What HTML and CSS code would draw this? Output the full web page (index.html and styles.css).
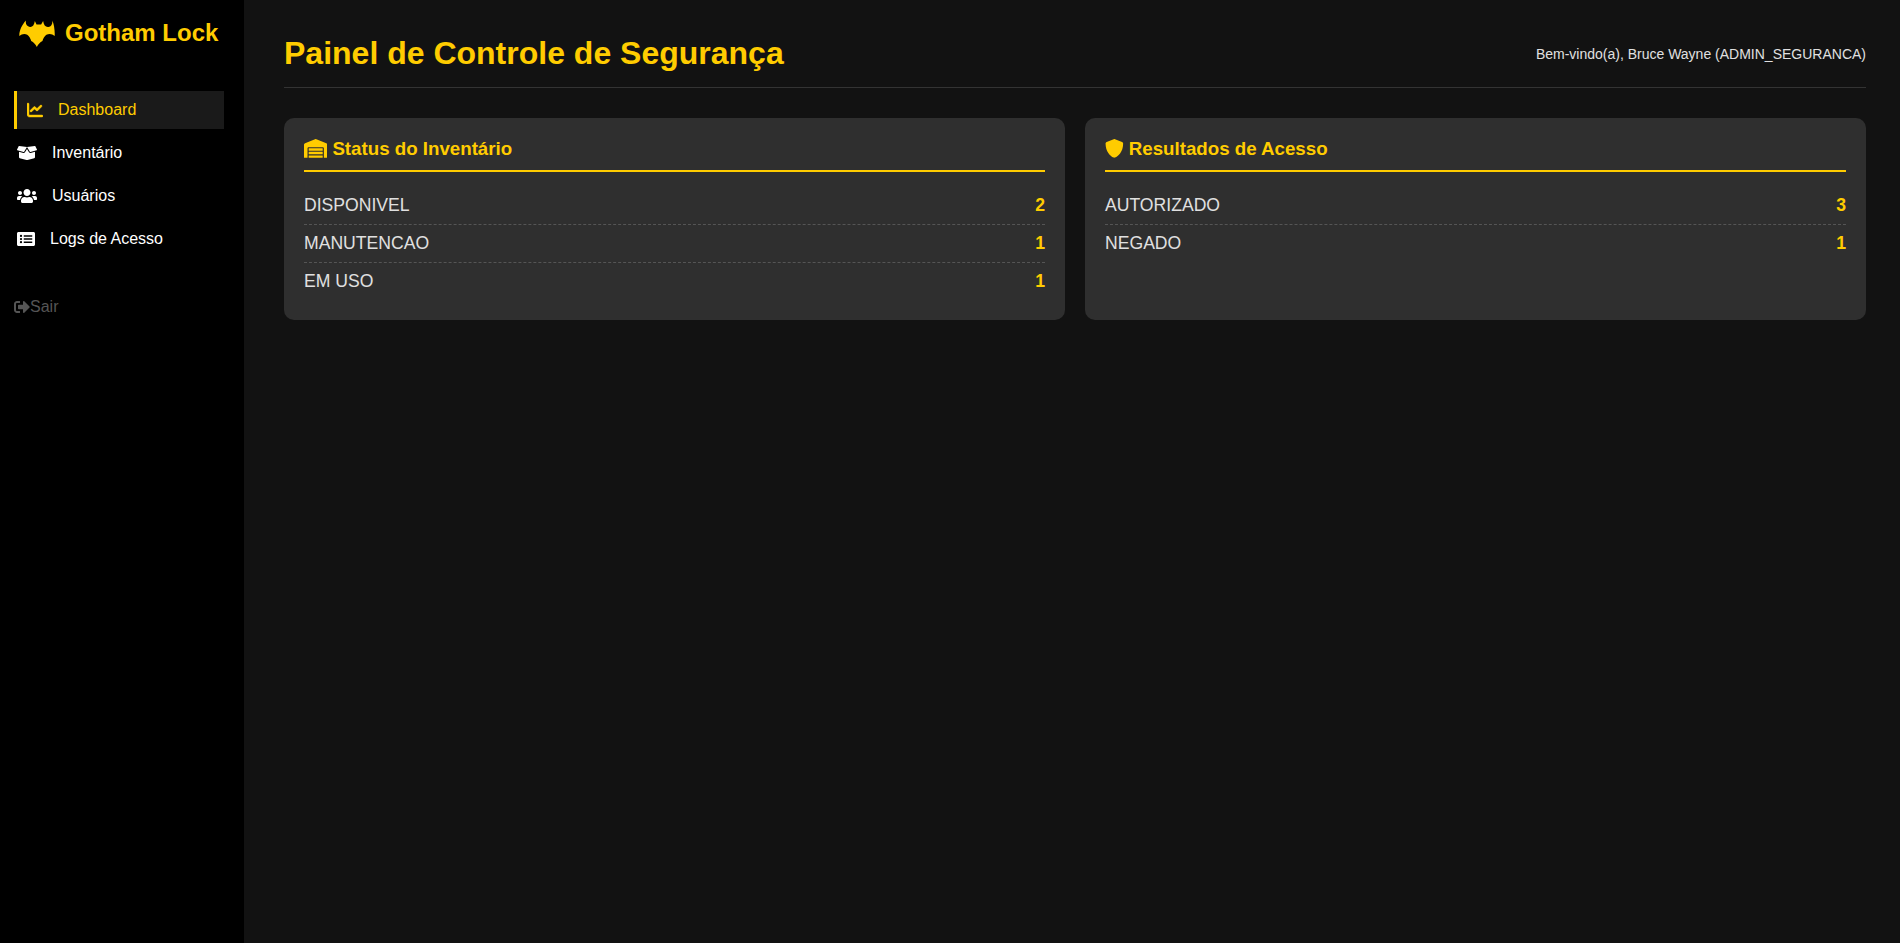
FILE: index.html
```html
<!DOCTYPE html>
<html lang="pt-BR">
<head>
    <meta charset="UTF-8">
    <title>Gotham Lock - Dashboard</title>
    <link rel="stylesheet" href="styles.css">
</head>
<body>
    <aside class="sidebar">
        <div class="logo">
            <svg class="logo-bat" viewBox="57 57 109 81"><path d="M78 58 C76 68 80 76 90 78 C98 79 103 72 105 60 L110 70 L124 70 L130 60 C132 72 137 79 146 78 C155 76 159 68 158 58 C163 70 166 88 165 105 C158 98 148 97 140 101 C134 106 130 112 128 120 C121 124 115 130 111 138 C107 130 101 124 94 120 C92 112 88 106 82 101 C75 97 65 98 58 105 C57 88 68 68 78 58 Z"/></svg>
            <span>Gotham Lock</span>
        </div>
        <nav class="menu">
            <a class="menu-item active" href="#">
                <svg class="icon icon-chart" viewBox="0 0 512 512"><path d="M64 64c0-17.700-14.300-32-32-32S0 46.300 0 64V400c0 44.200 35.800 80 80 80H480c17.700 0 32-14.300 32-32s-14.300-32-32-32H80c-8.800 0-16-7.200-16-16V64zm406.600 86.600c12.500-12.500 12.500-32.800 0-45.300s-32.800-12.500-45.300 0L320 210.700l-57.400-57.400c-12.500-12.500-32.800-12.500-45.300 0l-112 112c-12.500 12.500-12.500 32.800 0 45.300s32.800 12.500 45.300 0L240 221.300l57.400 57.400c12.500 12.500 32.800 12.500 45.300 0l128-128z"/></svg>
                Dashboard
            </a>
            <a class="menu-item" href="#">
                <svg class="icon icon-wide" viewBox="0 0 640 512"><path d="M425.700 256c-16.900 0-32.800-9-41.400-23.400L320 126l-64.200 106.600c-8.700 14.500-24.600 23.500-41.500 23.500-4.500 0-9-.6-13.300-1.900L64 215v178c0 14.700 10 27.500 24.200 31l216.200 54.100c10.200 2.500 20.900 2.500 31 0L551.800 424c14.200-3.600 24.200-16.400 24.200-31V215l-137 39.100c-4.300 1.300-8.800 1.900-13.300 1.900zm212.600-112.200L586.800 41c-3.100-6.200-9.800-9.800-16.700-8.900L320 64l91.700 152.100c3.800 6.300 11.400 9.300 18.500 7.300l197.900-56.500c9.900-2.900 14.700-13.900 10.200-23.100zM53.200 41L1.700 143.800c-4.600 9.200.3 20.200 10.100 23l197.900 56.500c7.100 2 14.700-1 18.500-7.300L320 64 69.800 32.100c-6.900-.8-13.500 2.700-16.600 8.900z"/></svg>
                Inventário
            </a>
            <a class="menu-item" href="#">
                <svg class="icon icon-wide" viewBox="0 0 640 512"><path d="M96 224c35.300 0 64-28.700 64-64s-28.700-64-64-64-64 28.700-64 64 28.700 64 64 64zm448 0c35.300 0 64-28.700 64-64s-28.700-64-64-64-64 28.700-64 64 28.700 64 64 64zm32 32h-64c-17.600 0-33.500 7.100-45.100 18.600 40.300 22.100 68.900 62 75.100 109.400h66c17.700 0 32-14.300 32-32v-32c0-35.300-28.700-64-64-64zm-256 0c61.900 0 112-50.100 112-112S381.900 32 320 32 208 82.100 208 144s50.100 112 112 112zm76.800 32h-8.300c-20.800 10-43.900 16-68.500 16s-47.600-6-68.500-16h-8.300C179.600 288 128 339.600 128 403.200V432c0 26.500 21.500 48 48 48h288c26.500 0 48-21.500 48-48v-28.800c0-63.600-51.600-115.200-115.200-115.200zm-223.700-13.400C161.500 263.100 145.600 256 128 256H64c-35.300 0-64 28.700-64 64v32c0 17.700 14.300 32 32 32h65.900c6.300-47.400 34.900-87.300 75.200-109.400z"/></svg>
                Usuários
            </a>
            <a class="menu-item" href="#">
                <svg class="icon icon-list" viewBox="0 0 576 512"><path fill-rule="evenodd" d="M48 32H528C554.500 32 576 53.500 576 80V432C576 458.500 554.500 480 528 480H48C21.500 480 0 458.500 0 432V80C0 53.500 21.500 32 48 32ZM128 120a36 36 0 1 0 0 72 36 36 0 1 0 0-72ZM128 220a36 36 0 1 0 0 72 36 36 0 1 0 0-72ZM128 320a36 36 0 1 0 0 72 36 36 0 1 0 0-72ZM216 132V180H488V132ZM216 232V280H488V232ZM216 332V380H488V332Z"/></svg>
                Logs de Acesso
            </a>
        </nav>
        <a class="logout" href="#">
            <svg class="icon-logout" viewBox="0 0 512 512"><path d="M497 273L329 441c-15 15-41 4.500-41-17v-96H152c-13.300 0-24-10.700-24-24v-96c0-13.300 10.700-24 24-24h136V88c0-21.400 25.900-32 41-17l168 168c9.300 9.400 9.300 24.600 0 34zM192 436v-40c0-6.600-5.400-12-12-12H96c-17.700 0-32-14.300-32-32V160c0-17.700 14.300-32 32-32h84c6.600 0 12-5.400 12-12V76c0-6.600-5.400-12-12-12H96c-53 0-96 43-96 96v192c0 53 43 96 96 96h84c6.600 0 12-5.400 12-12z"/></svg>Sair
        </a>
    </aside>

    <main class="content">
        <header class="top-bar">
            <h1>Painel de Controle de Segurança</h1>
            <p class="welcome">Bem-vindo(a), Bruce Wayne (ADMIN_SEGURANCA)</p>
        </header>

        <div class="cards">
            <section class="card">
                <h2>
                    <svg class="card-icon icon-warehouse" viewBox="0 0 640 512"><path d="M504 352H136.400c-4.400 0-8 3.600-8 8l-.1 48c0 4.400 3.600 8 8 8H504c4.400 0 8-3.600 8-8v-48c0-4.400-3.600-8-8-8zm0 96H136.100c-4.400 0-8 3.600-8 8l-.1 48c0 4.400 3.600 8 8 8h368c4.400 0 8-3.600 8-8v-48c0-4.400-3.600-8-8-8zm0-192H136.600c-4.400 0-8 3.600-8 8l-.1 48c0 4.400 3.600 8 8 8H504c4.400 0 8-3.600 8-8v-48c0-4.400-3.600-8-8-8zm106.500-139L338.400 3.700a48.150 48.150 0 0 0-36.900 0L29.500 117C11.700 124.500 0 141.900 0 161.300V504c0 4.400 3.600 8 8 8h80c4.400 0 8-3.600 8-8V256c0-17.600 14.600-32 32.600-32h382.800c18 0 32.600 14.400 32.600 32v248c0 4.400 3.600 8 8 8h80c4.400 0 8-3.600 8-8V161.300c0-19.400-11.700-36.800-29.500-44.300z"/></svg>
                    Status do Inventário
                </h2>
                <ul class="stat-list">
                    <li><span>DISPONIVEL</span><b>2</b></li>
                    <li><span>MANUTENCAO</span><b>1</b></li>
                    <li><span>EM USO</span><b>1</b></li>
                </ul>
            </section>
            <section class="card">
                <h2>
                    <svg class="card-icon icon-shield" viewBox="0 0 512 512"><path d="M466.500 83.700l-192-80a48.150 48.150 0 0 0-36.900 0l-192 80C27.700 91.100 16 108.600 16 128c0 198.500 114.500 335.700 221.500 380.300 11.800 4.900 25.100 4.900 36.900 0C360.100 472.600 496 349.300 496 128c0-19.400-11.700-36.900-29.500-44.300z"/></svg>
                    Resultados de Acesso
                </h2>
                <ul class="stat-list">
                    <li><span>AUTORIZADO</span><b>3</b></li>
                    <li><span>NEGADO</span><b>1</b></li>
                </ul>
            </section>
        </div>
    </main>
</body>
</html>
```

FILE: styles.css
```css
* {
    box-sizing: border-box;
}

body {
    margin: 0;
    height: 943px;
    display: flex;
    overflow: hidden;
    background-color: #121212;
    color: #e0e0e0;
    font-family: "Liberation Sans", Arial, sans-serif;
}

.sidebar {
    width: 244px;
    flex-shrink: 0;
    background-color: #000000;
    padding: 15px 14px;
}

.logo {
    display: flex;
    align-items: center;
    gap: 10px;
    height: 36px;
    padding-left: 5px;
    color: #ffcc00;
    font-size: 24px;
    font-weight: 700;
}

.logo-bat {
    width: 36px;
    height: 27px;
    fill: #ffcc00;
}

.menu {
    margin-top: 40px;
}

.menu-item {
    display: flex;
    align-items: center;
    gap: 15px;
    height: 38px;
    margin-bottom: 5px;
    padding-left: 3px;
    color: #ffffff;
    font-size: 16px;
    text-decoration: none;
}

.menu-item.active {
    width: 210px;
    padding-left: 10px;
    background-color: #1a1a1a;
    border-left: 3px solid #ffcc00;
    color: #ffcc00;
}

.icon {
    width: 16px;
    height: 16px;
    fill: currentColor;
}

.icon-chart {
    stroke: currentColor;
    stroke-width: 14;
}

.icon-wide {
    width: 20px;
}

.icon-list {
    width: 18px;
}

.logout {
    display: flex;
    align-items: center;
    margin-top: 40px;
    color: #555555;
    font-size: 16px;
    text-decoration: none;
}

.icon-logout {
    width: 16px;
    height: 16px;
    fill: currentColor;
}

.content {
    flex: 1;
    padding: 30px 34px 30px 40px;
}

.top-bar {
    display: flex;
    justify-content: space-between;
    align-items: center;
    height: 58px;
    padding-bottom: 10px;
    border-bottom: 1px solid #333333;
}

.top-bar h1 {
    margin: 0;
    color: #ffcc00;
    font-size: 32px;
    font-weight: 700;
}

.welcome {
    margin: 0;
    font-size: 14px;
}

.cards {
    display: grid;
    grid-template-columns: 1fr 1fr;
    gap: 20px;
    margin-top: 30px;
}

.card {
    height: 202px;
    padding: 20px;
    background-color: #2f2f2f;
    border-radius: 10px;
}

.card h2 {
    display: flex;
    align-items: center;
    gap: 5px;
    margin: 0 0 15px;
    height: 34px;
    padding-bottom: 11px;
    border-bottom: 2px solid #ffcc00;
    color: #ffcc00;
    font-size: 18.72px;
    font-weight: 700;
}

.card-icon {
    height: 18.72px;
    fill: currentColor;
}

.icon-warehouse {
    width: 23.4px;
}

.icon-shield {
    width: 18.72px;
}

.stat-list {
    margin: 0;
    padding: 0;
    list-style: none;
}

.stat-list li {
    display: flex;
    justify-content: space-between;
    align-items: center;
    height: 38px;
    border-bottom: 1px dashed #555555;
    font-size: 17.6px;
}

.stat-list li:last-child {
    height: 37px;
    border-bottom: none;
}

.stat-list b {
    color: #ffcc00;
}
```
